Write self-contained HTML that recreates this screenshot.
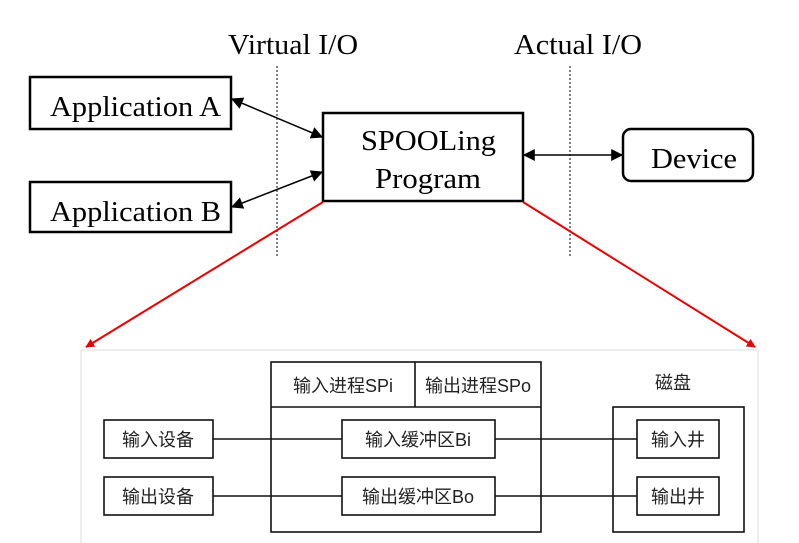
<!DOCTYPE html>
<html><head><meta charset="utf-8"><style>
html,body{margin:0;padding:0;background:#fff;}
svg{display:block}
.s{font-family:"Liberation Serif",serif;font-size:29px;fill:#000}
.c{font-family:"Liberation Sans","Noto Sans CJK SC",sans-serif;font-size:18px;fill:#222}
</style></head><body>
<svg width="799" height="543" viewBox="0 0 799 543" xmlns="http://www.w3.org/2000/svg">
<defs>
<marker id="a" viewBox="0 0 10 10" refX="9" refY="5" markerWidth="13" markerHeight="12" orient="auto-start-reverse" markerUnits="userSpaceOnUse"><path d="M0,0 L10,5 L0,10 z" fill="#000"/></marker>
<marker id="r" viewBox="0 0 10 10" refX="9" refY="5" markerWidth="9" markerHeight="9" orient="auto" markerUnits="userSpaceOnUse"><path d="M0,0 L10,5 L0,10 z" fill="#e00"/></marker>
</defs>
<text class="s" x="228" y="54" textLength="130" lengthAdjust="spacingAndGlyphs">Virtual I/O</text>
<text class="s" x="514" y="54" textLength="128" lengthAdjust="spacingAndGlyphs">Actual I/O</text>
<line x1="277" y1="66" x2="277" y2="258" stroke="#000" stroke-dasharray="2,2"/>
<line x1="570" y1="66" x2="570" y2="258" stroke="#000" stroke-dasharray="2,2"/>
<rect x="30" y="77" width="201" height="52" fill="none" stroke="#000" stroke-width="2.5"/>
<text class="s" x="50" y="116" textLength="171" lengthAdjust="spacingAndGlyphs">Application A</text>
<rect x="30" y="182" width="201" height="50" fill="none" stroke="#000" stroke-width="2.5"/>
<text class="s" x="50" y="221" textLength="171" lengthAdjust="spacingAndGlyphs">Application B</text>
<rect x="323" y="113" width="200" height="88" fill="none" stroke="#000" stroke-width="2.5"/>
<text class="s" x="361" y="150" textLength="135" lengthAdjust="spacingAndGlyphs">SPOOLing</text>
<text class="s" x="375" y="188" textLength="106" lengthAdjust="spacingAndGlyphs">Program</text>
<rect x="623" y="129" width="130" height="52" rx="8" fill="none" stroke="#000" stroke-width="2.5"/>
<text class="s" x="651" y="168" textLength="86" lengthAdjust="spacingAndGlyphs">Device</text>
<line x1="232" y1="99" x2="322" y2="137" stroke="#000" stroke-width="1.5" marker-start="url(#a)" marker-end="url(#a)"/>
<line x1="232" y1="207" x2="322" y2="172" stroke="#000" stroke-width="1.5" marker-start="url(#a)" marker-end="url(#a)"/>
<line x1="524" y1="155" x2="622" y2="155" stroke="#000" stroke-width="1.5" marker-start="url(#a)" marker-end="url(#a)"/>
<line x1="323" y1="202" x2="86" y2="347" stroke="#e00" stroke-width="2" marker-end="url(#r)"/>
<line x1="523" y1="202" x2="755" y2="347" stroke="#e00" stroke-width="2" marker-end="url(#r)"/>
<rect x="81" y="350" width="677" height="200" fill="none" stroke="#ddd" stroke-width="1"/>
<g stroke="#111" stroke-width="1.6" fill="none">
<rect x="271" y="362" width="270" height="170"/>
<line x1="271" y1="407" x2="541" y2="407"/>
<line x1="415" y1="362" x2="415" y2="407"/>
<rect x="104" y="420" width="109" height="38"/>
<rect x="104" y="477" width="109" height="38"/>
<rect x="342" y="420" width="153" height="38"/>
<rect x="342" y="477" width="153" height="38"/>
<rect x="613" y="407" width="131" height="125"/>
<rect x="637" y="420" width="82" height="38"/>
<rect x="637" y="477" width="82" height="38"/>
<line x1="213" y1="439" x2="342" y2="439"/>
<line x1="213" y1="496" x2="342" y2="496"/>
<line x1="495" y1="439" x2="637" y2="439"/>
<line x1="495" y1="496" x2="637" y2="496"/>
</g>
<text class="c" x="343" y="392" text-anchor="middle">输入进程SPi</text>
<text class="c" x="478" y="392" text-anchor="middle">输出进程SPo</text>
<text class="c" x="673" y="389" text-anchor="middle">磁盘</text>
<text class="c" x="158" y="446" text-anchor="middle">输入设备</text>
<text class="c" x="158" y="503" text-anchor="middle">输出设备</text>
<text class="c" x="418" y="446" text-anchor="middle">输入缓冲区Bi</text>
<text class="c" x="418" y="503" text-anchor="middle">输出缓冲区Bo</text>
<text class="c" x="678" y="446" text-anchor="middle">输入井</text>
<text class="c" x="678" y="503" text-anchor="middle">输出井</text>
</svg>
</body></html>
